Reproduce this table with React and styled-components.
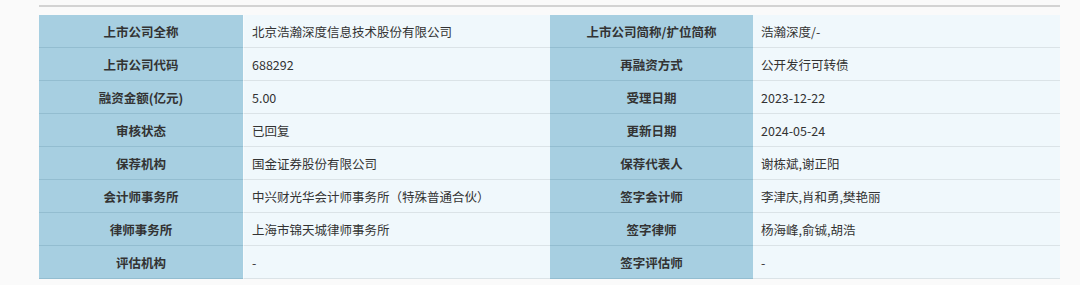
import React from "react";
import styled, { createGlobalStyle } from "styled-components";

const GlobalStyle = createGlobalStyle`
  body {
    margin: 0;
    background: #fafafa;
    font-family: "Noto Sans CJK SC", "Noto Sans", sans-serif;
  }
`;

const Page = styled.div`
  width: 1021px;
  padding: 5px 0 0 39px;
`;

const Rule = styled.div`
  height: 2px;
  background: #d3d3d3;
`;

const Table = styled.div`
  margin-top: 8px;
  display: grid;
  grid-template-columns: 204px 307px 203px 307px;
`;

const Label = styled.div`
  height: 32px;
  display: flex;
  align-items: center;
  justify-content: center;
  background: #a7cfe1;
  border-bottom: 1px solid #93bdd0;
  font-size: 12.5px;
  font-weight: 700;
  color: #333;
`;

const Value = styled.div`
  height: 32px;
  display: flex;
  align-items: center;
  padding-left: 8px;
  background: #f0f8fc;
  border-bottom: 1px solid #dbe3e7;
  border-left: ${(p) => (p.$first ? "1px solid #f7fbfd" : "none")};
  font-size: 12.5px;
  color: #333;
`;

const rows = [
  ["上市公司全称", "北京浩瀚深度信息技术股份有限公司", "上市公司简称/扩位简称", "浩瀚深度/-"],
  ["上市公司代码", "688292", "再融资方式", "公开发行可转债"],
  ["融资金额(亿元)", "5.00", "受理日期", "2023-12-22"],
  ["审核状态", "已回复", "更新日期", "2024-05-24"],
  ["保荐机构", "国金证券股份有限公司", "保荐代表人", "谢栋斌,谢正阳"],
  ["会计师事务所", "中兴财光华会计师事务所（特殊普通合伙）", "签字会计师", "李津庆,肖和勇,樊艳丽"],
  ["律师事务所", "上海市锦天城律师事务所", "签字律师", "杨海峰,俞铖,胡浩"],
  ["评估机构", "-", "签字评估师", "-"],
];

export default function App() {
  return (
    <>
      <GlobalStyle />
      <Page>
        <Rule />
        <Table>
          {rows.map((r, i) => (
            <React.Fragment key={i}>
              <Label>{r[0]}</Label>
              <Value $first>{r[1]}</Value>
              <Label>{r[2]}</Label>
              <Value>{r[3]}</Value>
            </React.Fragment>
          ))}
        </Table>
      </Page>
    </>
  );
}
